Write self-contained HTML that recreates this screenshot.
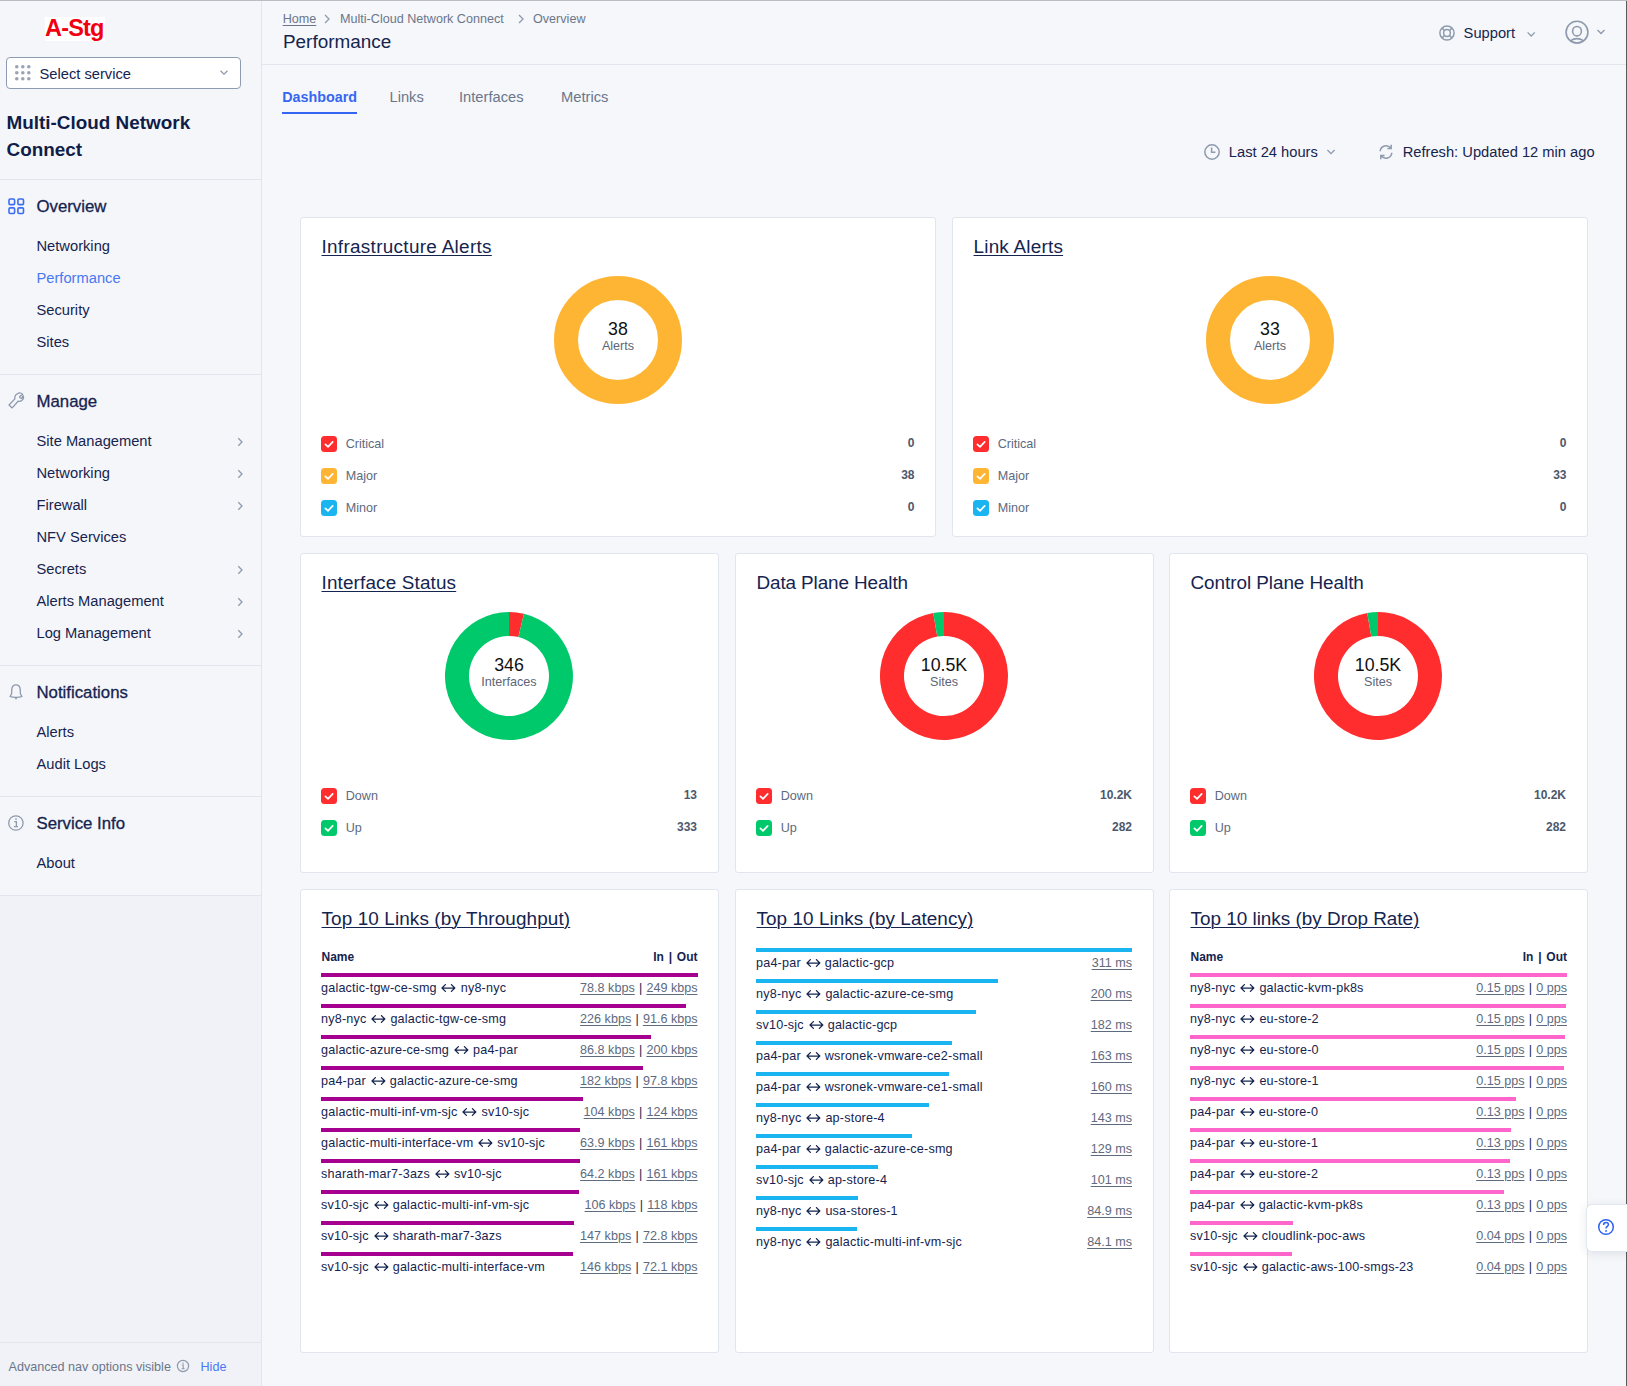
<!DOCTYPE html>
<html><head><meta charset="utf-8"><title>Performance</title>
<style>
html,body{margin:0;padding:0;width:1627px;height:1386px;overflow:hidden;background:#f4f6f9;}
body{position:relative;font-family:"Liberation Sans",sans-serif;}
.a{position:absolute;}
.t{position:absolute;white-space:nowrap;}
.card{background:#fff;border:1px solid #e0e5ee;border-radius:3px;}
.arr{display:inline-block;vertical-align:baseline;}
.sep{color:#15244f;padding:0 0.7px;}
.ul{text-decoration:underline;text-underline-offset:2px;text-decoration-thickness:1px;}
</style></head><body>
<div class="a" style="left:0px;top:0px;width:261px;height:896px;background:#f5f6f9;"></div>
<div class="a" style="left:0px;top:896px;width:261px;height:490px;background:#f0f2f7;"></div>
<div class="a" style="left:261px;top:0px;width:1px;height:1386px;background:#e0e5ee;"></div>
<div class="a" style="left:45px;top:17px;width:60px;height:24px;background:#ffffff;"></div>
<div class="t" style="top:17.00px;font-size:23.50px;line-height:23.50px;color:#f2000f;font-weight:700;left:45px;letter-spacing:-0.8px;">A-Stg</div>
<div class="a" style="left:6px;top:57px;width:233px;height:30px;border:1px solid #8f9bb0;border-radius:4px;background:#fff"></div>
<svg class="a" style="left:0;top:0" width="261" height="100"><circle cx="16.8" cy="66.8" r="1.8" fill="#9aa4b5"/><circle cx="16.8" cy="72.8" r="1.8" fill="#9aa4b5"/><circle cx="16.8" cy="78.8" r="1.8" fill="#9aa4b5"/><circle cx="22.8" cy="66.8" r="1.8" fill="#9aa4b5"/><circle cx="22.8" cy="72.8" r="1.8" fill="#9aa4b5"/><circle cx="22.8" cy="78.8" r="1.8" fill="#9aa4b5"/><circle cx="28.8" cy="66.8" r="1.8" fill="#9aa4b5"/><circle cx="28.8" cy="72.8" r="1.8" fill="#9aa4b5"/><circle cx="28.8" cy="78.8" r="1.8" fill="#9aa4b5"/><path d="M220.5 70.8 L224 74.2 L227.5 70.8" stroke="#8e9aad" stroke-width="1.3" fill="none"/></svg>
<div class="t" style="top:67.00px;font-size:14.70px;line-height:14.70px;color:#15244f;left:39.5px;">Select service</div>
<div class="t" style="top:114.00px;font-size:18.90px;line-height:18.90px;color:#0f1d48;font-weight:700;left:6.5px;">Multi-Cloud Network</div>
<div class="t" style="top:141.00px;font-size:18.90px;line-height:18.90px;color:#0f1d48;font-weight:700;left:6.5px;">Connect</div>
<div class="a" style="left:0px;top:179px;width:261px;height:1px;background:#e0e5ee;"></div>
<svg class="a" style="left:8px;top:198px" width="17" height="17" viewBox="0 0 17 17"><g fill="none" stroke="#3b6cf4" stroke-width="1.6"><rect x="1" y="1" width="5.6" height="5.6" rx="1.2"/><rect x="9.9" y="1" width="5.6" height="5.6" rx="1.2"/><rect x="1" y="9.9" width="5.6" height="5.6" rx="1.2"/><rect x="9.9" y="9.9" width="5.6" height="5.6" rx="1.2"/></g></svg>
<div class="t" style="top:199.00px;font-size:16.80px;line-height:16.80px;color:#15244f;left:36.5px;-webkit-text-stroke:0.3px #15244f;">Overview</div>
<div class="t" style="top:239.00px;font-size:14.70px;line-height:14.70px;color:#15244f;left:36.5px;">Networking</div>
<div class="t" style="top:271.00px;font-size:14.70px;line-height:14.70px;color:#4a78f2;left:36.5px;">Performance</div>
<div class="t" style="top:303.00px;font-size:14.70px;line-height:14.70px;color:#15244f;left:36.5px;">Security</div>
<div class="t" style="top:335.00px;font-size:14.70px;line-height:14.70px;color:#15244f;left:36.5px;">Sites</div>
<div class="a" style="left:0px;top:374px;width:261px;height:1px;background:#e0e5ee;"></div>
<svg class="a" style="left:7px;top:391px" width="18" height="18" viewBox="0 0 18 18"><path d="M10.6 2.6 C12.2 1.6 14.6 1.9 15.6 3.4 L12.6 5.6 L13.2 7 L14.5 7.4 L16.2 4.8 C17.2 7 15.6 10.3 12.3 10.3 L11.1 10.2 L5.2 16.9 L2 14 L7.9 7.9 L7.8 6.2 C7.9 4.7 9.2 3.2 10.6 2.6 Z" fill="none" stroke="#8e9aad" stroke-width="1.3" stroke-linejoin="round"/></svg>
<div class="t" style="top:394.00px;font-size:16.80px;line-height:16.80px;color:#15244f;left:36.5px;-webkit-text-stroke:0.3px #15244f;">Manage</div>
<div class="t" style="top:434.00px;font-size:14.70px;line-height:14.70px;color:#15244f;left:36.5px;">Site Management</div>
<svg class="a" style="left:234px;top:435.5px" width="12" height="12"><path d="M4.3 2.2 L8 6 L4.3 9.8" stroke="#8e9aad" stroke-width="1.3" fill="none"/></svg>
<div class="t" style="top:466.00px;font-size:14.70px;line-height:14.70px;color:#15244f;left:36.5px;">Networking</div>
<svg class="a" style="left:234px;top:467.5px" width="12" height="12"><path d="M4.3 2.2 L8 6 L4.3 9.8" stroke="#8e9aad" stroke-width="1.3" fill="none"/></svg>
<div class="t" style="top:498.00px;font-size:14.70px;line-height:14.70px;color:#15244f;left:36.5px;">Firewall</div>
<svg class="a" style="left:234px;top:499.5px" width="12" height="12"><path d="M4.3 2.2 L8 6 L4.3 9.8" stroke="#8e9aad" stroke-width="1.3" fill="none"/></svg>
<div class="t" style="top:530.00px;font-size:14.70px;line-height:14.70px;color:#15244f;left:36.5px;">NFV Services</div>
<div class="t" style="top:562.00px;font-size:14.70px;line-height:14.70px;color:#15244f;left:36.5px;">Secrets</div>
<svg class="a" style="left:234px;top:563.5px" width="12" height="12"><path d="M4.3 2.2 L8 6 L4.3 9.8" stroke="#8e9aad" stroke-width="1.3" fill="none"/></svg>
<div class="t" style="top:594.00px;font-size:14.70px;line-height:14.70px;color:#15244f;left:36.5px;">Alerts Management</div>
<svg class="a" style="left:234px;top:595.5px" width="12" height="12"><path d="M4.3 2.2 L8 6 L4.3 9.8" stroke="#8e9aad" stroke-width="1.3" fill="none"/></svg>
<div class="t" style="top:626.00px;font-size:14.70px;line-height:14.70px;color:#15244f;left:36.5px;">Log Management</div>
<svg class="a" style="left:234px;top:627.5px" width="12" height="12"><path d="M4.3 2.2 L8 6 L4.3 9.8" stroke="#8e9aad" stroke-width="1.3" fill="none"/></svg>
<div class="a" style="left:0px;top:665px;width:261px;height:1px;background:#e0e5ee;"></div>
<svg class="a" style="left:7px;top:683px" width="18" height="18" viewBox="0 0 18 18"><path d="M3 13.5 L4.6 10.8 L4.8 6.2 C5 3.6 6.8 1.8 9 1.8 C11.2 1.8 13 3.6 13.2 6.2 L13.4 10.8 L15 13.5 C12 14.6 6 14.6 3 13.5 Z" fill="none" stroke="#8e9aad" stroke-width="1.3" stroke-linejoin="round"/><path d="M7.3 14.6 L9 16.8 L10.7 14.6 Z" fill="#8e9aad"/></svg>
<div class="t" style="top:685.00px;font-size:16.80px;line-height:16.80px;color:#15244f;left:36.5px;-webkit-text-stroke:0.3px #15244f;">Notifications</div>
<div class="t" style="top:725.00px;font-size:14.70px;line-height:14.70px;color:#15244f;left:36.5px;">Alerts</div>
<div class="t" style="top:757.00px;font-size:14.70px;line-height:14.70px;color:#15244f;left:36.5px;">Audit Logs</div>
<div class="a" style="left:0px;top:796px;width:261px;height:1px;background:#e0e5ee;"></div>
<svg class="a" style="left:7px;top:814px" width="18" height="18" viewBox="0 0 18 18"><circle cx="8.9" cy="9" r="7.2" fill="none" stroke="#8e9aad" stroke-width="1.3"/><rect x="8.3" y="4.3" width="1.5" height="1.6" fill="#8e9aad"/><path d="M7.2 7.6 H9.4 V12.6 M6.9 12.6 H11" fill="none" stroke="#8e9aad" stroke-width="1.3"/></svg>
<div class="t" style="top:816.00px;font-size:16.80px;line-height:16.80px;color:#15244f;left:36.5px;-webkit-text-stroke:0.3px #15244f;">Service Info</div>
<div class="t" style="top:856.00px;font-size:14.70px;line-height:14.70px;color:#15244f;left:36.5px;">About</div>
<div class="a" style="left:0px;top:895px;width:261px;height:1px;background:#e0e5ee;"></div>
<div class="a" style="left:0px;top:1342px;width:261px;height:1px;background:#e0e5ee;"></div>
<div class="t" style="top:1361.00px;font-size:12.60px;line-height:12.60px;color:#6b768a;left:8.5px;">Advanced nav options visible</div>
<svg class="a" style="left:176px;top:1359px" width="14" height="14" viewBox="0 0 14 14"><circle cx="7" cy="7" r="5.6" fill="none" stroke="#8e9aad" stroke-width="1.2"/><rect x="6.5" y="3.6" width="1.2" height="1.2" fill="#8e9aad"/><path d="M5.8 6 H7.2 V9.8 M5.6 9.8 H8.6" fill="none" stroke="#8e9aad" stroke-width="1.1"/></svg>
<div class="t" style="top:1361.00px;font-size:12.60px;line-height:12.60px;color:#4a78f2;left:200.5px;">Hide</div>
<div class="a" style="left:262px;top:0px;width:1365px;height:1386px;background:#f5f7fa;"></div>
<div class="a" style="left:262px;top:64px;width:1365px;height:1px;background:#e0e5ee;"></div>
<div class="t" style="top:13.00px;font-size:12.60px;line-height:12.60px;color:#6b768a;left:282.7px;"><span style="text-decoration:underline;text-underline-offset:2px">Home</span></div>
<svg class="a" style="left:320px;top:12px" width="14" height="14"><path d="M5 3 L9 7 L5 11" stroke="#8e9aad" stroke-width="1.3" fill="none"/></svg>
<div class="t" style="top:13.00px;font-size:12.60px;line-height:12.60px;color:#6b768a;left:340px;">Multi-Cloud Network Connect</div>
<svg class="a" style="left:514px;top:12px" width="14" height="14"><path d="M5 3 L9 7 L5 11" stroke="#8e9aad" stroke-width="1.3" fill="none"/></svg>
<div class="t" style="top:13.00px;font-size:12.60px;line-height:12.60px;color:#6b768a;left:533px;">Overview</div>
<div class="t" style="top:33.00px;font-size:18.90px;line-height:18.90px;color:#15244f;left:283px;">Performance</div>
<svg class="a" style="left:1438px;top:24px" width="18" height="18" viewBox="0 0 18 18"><g fill="none" stroke="#8e9aad" stroke-width="1.5"><circle cx="9" cy="9" r="7.1"/><circle cx="9" cy="9" r="3.4"/><path d="M3.9 3.9 L6.7 6.7 M14.1 3.9 L11.3 6.7 M3.9 14.1 L6.7 11.3 M14.1 14.1 L11.3 11.3"/></g></svg>
<div class="t" style="top:26.00px;font-size:14.70px;line-height:14.70px;color:#15244f;left:1463.6px;">Support</div>
<svg class="a" style="left:1524px;top:27px" width="14" height="14"><path d="M3.6 5.4 L7.2 9 L10.8 5.4" stroke="#8e9aad" stroke-width="1.3" fill="none"/></svg>
<svg class="a" style="left:1564px;top:20px" width="26" height="26" viewBox="0 0 26 26"><g fill="none" stroke="#8e9aad" stroke-width="1.6"><circle cx="13" cy="12.2" r="10.9"/><ellipse cx="13" cy="11.2" rx="4.4" ry="4.7"/><path d="M6.4 20.9 Q13 16.4 19.6 20.9"/></g></svg>
<svg class="a" style="left:1594px;top:25px" width="14" height="14"><path d="M3.5 5 L7 8.5 L10.5 5" stroke="#8e9aad" stroke-width="1.3" fill="none"/></svg>
<div class="a" style="left:1626px;top:0px;width:1px;height:1386px;background:#5a5a5a;"></div>
<div class="t" style="top:90.00px;font-size:14.30px;line-height:14.30px;color:#3566f2;font-weight:700;left:282.3px;">Dashboard</div>
<div class="a" style="left:282px;top:112px;width:75px;height:2px;background:#3566f2;"></div>
<div class="t" style="top:90.00px;font-size:14.70px;line-height:14.70px;color:#6b768a;left:389.5px;">Links</div>
<div class="t" style="top:90.00px;font-size:14.70px;line-height:14.70px;color:#6b768a;left:459px;">Interfaces</div>
<div class="t" style="top:90.00px;font-size:14.70px;line-height:14.70px;color:#6b768a;left:561px;">Metrics</div>
<svg class="a" style="left:1203px;top:143px" width="18" height="18" viewBox="0 0 18 18"><g fill="none" stroke="#8e9aad" stroke-width="1.5"><circle cx="9" cy="9" r="7.2"/><path d="M8.6 4.6 V9.3 H12.4"/></g></svg>
<div class="t" style="top:145.00px;font-size:14.70px;line-height:14.70px;color:#15244f;left:1228.8px;">Last 24 hours</div>
<svg class="a" style="left:1324px;top:145px" width="14" height="14"><path d="M3.4 5 L7 8.6 L10.6 5" stroke="#8e9aad" stroke-width="1.3" fill="none"/></svg>
<svg class="a" style="left:1377px;top:143px" width="18" height="18" viewBox="0 0 18 18"><g fill="none" stroke="#8e9aad" stroke-width="1.5"><path d="M3.2 8.3 A5.9 5.9 0 0 1 13.8 5.2"/><path d="M14.2 1.8 V5.6 H10.4"/><path d="M14.8 9.7 A5.9 5.9 0 0 1 4.2 12.8"/><path d="M3.8 16.2 V12.4 H7.6"/></g></svg>
<div class="t" style="top:145.00px;font-size:14.70px;line-height:14.70px;color:#15244f;left:1402.7px;">Refresh: Updated 12 min ago</div>
<div class="a card" style="left:300px;top:217px;width:634px;height:318px"></div>
<div class="t" style="top:238.00px;font-size:18.90px;line-height:18.90px;color:#15244f;left:321.5px;letter-spacing:0.31px;"><span class="ul">Infrastructure Alerts</span></div>
<svg class="a" style="left:0;top:0;overflow:visible" width="1" height="1"><circle cx="618" cy="340" r="52" fill="none" stroke="#ffb534" stroke-width="24"/></svg>
<div class="t" style="top:321.00px;font-size:17.80px;line-height:17.80px;color:#111111;left:518.0px;width:200px;text-align:center;">38</div>
<div class="t" style="top:340.00px;font-size:12.60px;line-height:12.60px;color:#5c6577;left:518.0px;width:200px;text-align:center;">Alerts</div>
<svg class="a" style="left:321px;top:436px" width="16" height="16"><rect width="16" height="16" rx="3.5" fill="#ff2d2d"/><path d="M4.4 8.3 L7 10.8 L11.7 5.8" stroke="#fff" stroke-width="1.7" fill="none" stroke-linecap="round" stroke-linejoin="round"/></svg>
<div class="t" style="top:438.00px;font-size:12.60px;line-height:12.60px;color:#5d6a80;left:345.7px;">Critical</div>
<div class="t" style="top:437.00px;font-size:12.00px;line-height:12.00px;color:#4c586c;font-weight:700;right:712.5px;text-align:right;">0</div>
<svg class="a" style="left:321px;top:468px" width="16" height="16"><rect width="16" height="16" rx="3.5" fill="#ffb534"/><path d="M4.4 8.3 L7 10.8 L11.7 5.8" stroke="#fff" stroke-width="1.7" fill="none" stroke-linecap="round" stroke-linejoin="round"/></svg>
<div class="t" style="top:470.00px;font-size:12.60px;line-height:12.60px;color:#5d6a80;left:345.7px;">Major</div>
<div class="t" style="top:469.00px;font-size:12.00px;line-height:12.00px;color:#4c586c;font-weight:700;right:712.5px;text-align:right;">38</div>
<svg class="a" style="left:321px;top:500px" width="16" height="16"><rect width="16" height="16" rx="3.5" fill="#1ab4f0"/><path d="M4.4 8.3 L7 10.8 L11.7 5.8" stroke="#fff" stroke-width="1.7" fill="none" stroke-linecap="round" stroke-linejoin="round"/></svg>
<div class="t" style="top:502.00px;font-size:12.60px;line-height:12.60px;color:#5d6a80;left:345.7px;">Minor</div>
<div class="t" style="top:501.00px;font-size:12.00px;line-height:12.00px;color:#4c586c;font-weight:700;right:712.5px;text-align:right;">0</div>
<div class="a card" style="left:952px;top:217px;width:634px;height:318px"></div>
<div class="t" style="top:238.00px;font-size:18.90px;line-height:18.90px;color:#15244f;left:973.5px;letter-spacing:0.22px;"><span class="ul">Link Alerts</span></div>
<svg class="a" style="left:0;top:0;overflow:visible" width="1" height="1"><circle cx="1270" cy="340" r="52" fill="none" stroke="#ffb534" stroke-width="24"/></svg>
<div class="t" style="top:321.00px;font-size:17.80px;line-height:17.80px;color:#111111;left:1170.0px;width:200px;text-align:center;">33</div>
<div class="t" style="top:340.00px;font-size:12.60px;line-height:12.60px;color:#5c6577;left:1170.0px;width:200px;text-align:center;">Alerts</div>
<svg class="a" style="left:973px;top:436px" width="16" height="16"><rect width="16" height="16" rx="3.5" fill="#ff2d2d"/><path d="M4.4 8.3 L7 10.8 L11.7 5.8" stroke="#fff" stroke-width="1.7" fill="none" stroke-linecap="round" stroke-linejoin="round"/></svg>
<div class="t" style="top:438.00px;font-size:12.60px;line-height:12.60px;color:#5d6a80;left:997.7px;">Critical</div>
<div class="t" style="top:437.00px;font-size:12.00px;line-height:12.00px;color:#4c586c;font-weight:700;right:60.5px;text-align:right;">0</div>
<svg class="a" style="left:973px;top:468px" width="16" height="16"><rect width="16" height="16" rx="3.5" fill="#ffb534"/><path d="M4.4 8.3 L7 10.8 L11.7 5.8" stroke="#fff" stroke-width="1.7" fill="none" stroke-linecap="round" stroke-linejoin="round"/></svg>
<div class="t" style="top:470.00px;font-size:12.60px;line-height:12.60px;color:#5d6a80;left:997.7px;">Major</div>
<div class="t" style="top:469.00px;font-size:12.00px;line-height:12.00px;color:#4c586c;font-weight:700;right:60.5px;text-align:right;">33</div>
<svg class="a" style="left:973px;top:500px" width="16" height="16"><rect width="16" height="16" rx="3.5" fill="#1ab4f0"/><path d="M4.4 8.3 L7 10.8 L11.7 5.8" stroke="#fff" stroke-width="1.7" fill="none" stroke-linecap="round" stroke-linejoin="round"/></svg>
<div class="t" style="top:502.00px;font-size:12.60px;line-height:12.60px;color:#5d6a80;left:997.7px;">Minor</div>
<div class="t" style="top:501.00px;font-size:12.00px;line-height:12.00px;color:#4c586c;font-weight:700;right:60.5px;text-align:right;">0</div>
<div class="a card" style="left:300px;top:553px;width:417px;height:318px"></div>
<div class="t" style="top:574.00px;font-size:18.90px;line-height:18.90px;color:#15244f;left:321.5px;letter-spacing:0.15px;"><span class="ul">Interface Status</span></div>
<svg class="a" style="left:0;top:0;overflow:visible" width="1" height="1"><path d="M509.00 612.00 A64 64 0 0 1 523.97 613.78 L518.36 637.11 A40 40 0 0 0 509.00 636.00 Z" fill="#ff2d2d"/><path d="M523.97 613.78 A64 64 0 1 1 509.00 612.00 L509.00 636.00 A40 40 0 1 0 518.36 637.11 Z" fill="#00c96b"/></svg>
<div class="t" style="top:657.00px;font-size:17.80px;line-height:17.80px;color:#111111;left:409.0px;width:200px;text-align:center;">346</div>
<div class="t" style="top:676.00px;font-size:12.60px;line-height:12.60px;color:#5c6577;left:409.0px;width:200px;text-align:center;">Interfaces</div>
<svg class="a" style="left:321px;top:788px" width="16" height="16"><rect width="16" height="16" rx="3.5" fill="#ff2d2d"/><path d="M4.4 8.3 L7 10.8 L11.7 5.8" stroke="#fff" stroke-width="1.7" fill="none" stroke-linecap="round" stroke-linejoin="round"/></svg>
<div class="t" style="top:790.00px;font-size:12.60px;line-height:12.60px;color:#5d6a80;left:345.7px;">Down</div>
<div class="t" style="top:789.00px;font-size:12.00px;line-height:12.00px;color:#4c586c;font-weight:700;right:930px;text-align:right;">13</div>
<svg class="a" style="left:321px;top:820px" width="16" height="16"><rect width="16" height="16" rx="3.5" fill="#00c96b"/><path d="M4.4 8.3 L7 10.8 L11.7 5.8" stroke="#fff" stroke-width="1.7" fill="none" stroke-linecap="round" stroke-linejoin="round"/></svg>
<div class="t" style="top:822.00px;font-size:12.60px;line-height:12.60px;color:#5d6a80;left:345.7px;">Up</div>
<div class="t" style="top:821.00px;font-size:12.00px;line-height:12.00px;color:#4c586c;font-weight:700;right:930px;text-align:right;">333</div>
<div class="a card" style="left:735px;top:553px;width:417px;height:318px"></div>
<div class="t" style="top:574.00px;font-size:18.90px;line-height:18.90px;color:#15244f;left:756.5px;letter-spacing:-0.11px;">Data Plane Health</div>
<svg class="a" style="left:0;top:0;overflow:visible" width="1" height="1"><path d="M944.00 612.00 A64 64 0 1 1 933.23 612.91 L937.27 636.57 A40 40 0 1 0 944.00 636.00 Z" fill="#ff2d2d"/><path d="M933.23 612.91 A64 64 0 0 1 944.00 612.00 L944.00 636.00 A40 40 0 0 0 937.27 636.57 Z" fill="#00c96b"/></svg>
<div class="t" style="top:657.00px;font-size:17.80px;line-height:17.80px;color:#111111;left:844.0px;width:200px;text-align:center;">10.5K</div>
<div class="t" style="top:676.00px;font-size:12.60px;line-height:12.60px;color:#5c6577;left:844.0px;width:200px;text-align:center;">Sites</div>
<svg class="a" style="left:756px;top:788px" width="16" height="16"><rect width="16" height="16" rx="3.5" fill="#ff2d2d"/><path d="M4.4 8.3 L7 10.8 L11.7 5.8" stroke="#fff" stroke-width="1.7" fill="none" stroke-linecap="round" stroke-linejoin="round"/></svg>
<div class="t" style="top:790.00px;font-size:12.60px;line-height:12.60px;color:#5d6a80;left:780.7px;">Down</div>
<div class="t" style="top:789.00px;font-size:12.00px;line-height:12.00px;color:#4c586c;font-weight:700;right:495px;text-align:right;">10.2K</div>
<svg class="a" style="left:756px;top:820px" width="16" height="16"><rect width="16" height="16" rx="3.5" fill="#00c96b"/><path d="M4.4 8.3 L7 10.8 L11.7 5.8" stroke="#fff" stroke-width="1.7" fill="none" stroke-linecap="round" stroke-linejoin="round"/></svg>
<div class="t" style="top:822.00px;font-size:12.60px;line-height:12.60px;color:#5d6a80;left:780.7px;">Up</div>
<div class="t" style="top:821.00px;font-size:12.00px;line-height:12.00px;color:#4c586c;font-weight:700;right:495px;text-align:right;">282</div>
<div class="a card" style="left:1169px;top:553px;width:417px;height:318px"></div>
<div class="t" style="top:574.00px;font-size:18.90px;line-height:18.90px;color:#15244f;left:1190.5px;letter-spacing:-0.05px;">Control Plane Health</div>
<svg class="a" style="left:0;top:0;overflow:visible" width="1" height="1"><path d="M1378.00 612.00 A64 64 0 1 1 1367.23 612.91 L1371.27 636.57 A40 40 0 1 0 1378.00 636.00 Z" fill="#ff2d2d"/><path d="M1367.23 612.91 A64 64 0 0 1 1378.00 612.00 L1378.00 636.00 A40 40 0 0 0 1371.27 636.57 Z" fill="#00c96b"/></svg>
<div class="t" style="top:657.00px;font-size:17.80px;line-height:17.80px;color:#111111;left:1278.0px;width:200px;text-align:center;">10.5K</div>
<div class="t" style="top:676.00px;font-size:12.60px;line-height:12.60px;color:#5c6577;left:1278.0px;width:200px;text-align:center;">Sites</div>
<svg class="a" style="left:1190px;top:788px" width="16" height="16"><rect width="16" height="16" rx="3.5" fill="#ff2d2d"/><path d="M4.4 8.3 L7 10.8 L11.7 5.8" stroke="#fff" stroke-width="1.7" fill="none" stroke-linecap="round" stroke-linejoin="round"/></svg>
<div class="t" style="top:790.00px;font-size:12.60px;line-height:12.60px;color:#5d6a80;left:1214.7px;">Down</div>
<div class="t" style="top:789.00px;font-size:12.00px;line-height:12.00px;color:#4c586c;font-weight:700;right:61px;text-align:right;">10.2K</div>
<svg class="a" style="left:1190px;top:820px" width="16" height="16"><rect width="16" height="16" rx="3.5" fill="#00c96b"/><path d="M4.4 8.3 L7 10.8 L11.7 5.8" stroke="#fff" stroke-width="1.7" fill="none" stroke-linecap="round" stroke-linejoin="round"/></svg>
<div class="t" style="top:822.00px;font-size:12.60px;line-height:12.60px;color:#5d6a80;left:1214.7px;">Up</div>
<div class="t" style="top:821.00px;font-size:12.00px;line-height:12.00px;color:#4c586c;font-weight:700;right:61px;text-align:right;">282</div>
<div class="a card" style="left:300px;top:889px;width:417px;height:462px"></div>
<div class="t" style="top:910.00px;font-size:18.90px;line-height:18.90px;color:#15244f;left:321.5px;letter-spacing:0.12px;"><span class="ul">Top 10 Links (by Throughput)</span></div>
<div class="t" style="top:951.00px;font-size:12.00px;line-height:12.00px;color:#15244f;font-weight:700;left:321.5px;">Name</div>
<div class="t" style="top:951.00px;font-size:12.00px;line-height:12.00px;color:#15244f;font-weight:700;right:929.5px;text-align:right;">In<span style='padding:0 1.5px'> | </span>Out</div>
<div class="a" style="left:321px;top:973px;width:377px;height:4px;background:#a5008f;"></div>
<div class="t" style="top:982.00px;font-size:12.60px;line-height:12.60px;color:#15244f;left:321px;letter-spacing:0.2px;">galactic-tgw-ce-smg <svg class="arr" width="16.5" height="8" viewBox="0 0 16.5 8"><path d="M2 4 H14.8 M5.4 0.6 L2 4 L5.4 7.4 M11.4 0.6 L14.8 4 L11.4 7.4" fill="none" stroke="#15244f" stroke-width="1.25" stroke-linecap="round" stroke-linejoin="round"/></svg> ny8-nyc</div>
<div class="t" style="top:982.00px;font-size:12.60px;line-height:12.60px;color:#5e6a7e;right:929.5px;text-align:right;"><span class="ul">78.8 kbps</span><span class="sep"> | </span><span class="ul">249 kbps</span></div>
<div class="a" style="left:321px;top:1004px;width:365px;height:4px;background:#a5008f;"></div>
<div class="t" style="top:1013.00px;font-size:12.60px;line-height:12.60px;color:#15244f;left:321px;letter-spacing:0.2px;">ny8-nyc <svg class="arr" width="16.5" height="8" viewBox="0 0 16.5 8"><path d="M2 4 H14.8 M5.4 0.6 L2 4 L5.4 7.4 M11.4 0.6 L14.8 4 L11.4 7.4" fill="none" stroke="#15244f" stroke-width="1.25" stroke-linecap="round" stroke-linejoin="round"/></svg> galactic-tgw-ce-smg</div>
<div class="t" style="top:1013.00px;font-size:12.60px;line-height:12.60px;color:#5e6a7e;right:929.5px;text-align:right;"><span class="ul">226 kbps</span><span class="sep"> | </span><span class="ul">91.6 kbps</span></div>
<div class="a" style="left:321px;top:1035px;width:329.5px;height:4px;background:#a5008f;"></div>
<div class="t" style="top:1044.00px;font-size:12.60px;line-height:12.60px;color:#15244f;left:321px;letter-spacing:0.2px;">galactic-azure-ce-smg <svg class="arr" width="16.5" height="8" viewBox="0 0 16.5 8"><path d="M2 4 H14.8 M5.4 0.6 L2 4 L5.4 7.4 M11.4 0.6 L14.8 4 L11.4 7.4" fill="none" stroke="#15244f" stroke-width="1.25" stroke-linecap="round" stroke-linejoin="round"/></svg> pa4-par</div>
<div class="t" style="top:1044.00px;font-size:12.60px;line-height:12.60px;color:#5e6a7e;right:929.5px;text-align:right;"><span class="ul">86.8 kbps</span><span class="sep"> | </span><span class="ul">200 kbps</span></div>
<div class="a" style="left:321px;top:1066px;width:322px;height:4px;background:#a5008f;"></div>
<div class="t" style="top:1075.00px;font-size:12.60px;line-height:12.60px;color:#15244f;left:321px;letter-spacing:0.2px;">pa4-par <svg class="arr" width="16.5" height="8" viewBox="0 0 16.5 8"><path d="M2 4 H14.8 M5.4 0.6 L2 4 L5.4 7.4 M11.4 0.6 L14.8 4 L11.4 7.4" fill="none" stroke="#15244f" stroke-width="1.25" stroke-linecap="round" stroke-linejoin="round"/></svg> galactic-azure-ce-smg</div>
<div class="t" style="top:1075.00px;font-size:12.60px;line-height:12.60px;color:#5e6a7e;right:929.5px;text-align:right;"><span class="ul">182 kbps</span><span class="sep"> | </span><span class="ul">97.8 kbps</span></div>
<div class="a" style="left:321px;top:1097px;width:262px;height:4px;background:#a5008f;"></div>
<div class="t" style="top:1106.00px;font-size:12.60px;line-height:12.60px;color:#15244f;left:321px;letter-spacing:0.2px;">galactic-multi-inf-vm-sjc <svg class="arr" width="16.5" height="8" viewBox="0 0 16.5 8"><path d="M2 4 H14.8 M5.4 0.6 L2 4 L5.4 7.4 M11.4 0.6 L14.8 4 L11.4 7.4" fill="none" stroke="#15244f" stroke-width="1.25" stroke-linecap="round" stroke-linejoin="round"/></svg> sv10-sjc</div>
<div class="t" style="top:1106.00px;font-size:12.60px;line-height:12.60px;color:#5e6a7e;right:929.5px;text-align:right;"><span class="ul">104 kbps</span><span class="sep"> | </span><span class="ul">124 kbps</span></div>
<div class="a" style="left:321px;top:1128px;width:259px;height:4px;background:#a5008f;"></div>
<div class="t" style="top:1137.00px;font-size:12.60px;line-height:12.60px;color:#15244f;left:321px;letter-spacing:0.2px;">galactic-multi-interface-vm <svg class="arr" width="16.5" height="8" viewBox="0 0 16.5 8"><path d="M2 4 H14.8 M5.4 0.6 L2 4 L5.4 7.4 M11.4 0.6 L14.8 4 L11.4 7.4" fill="none" stroke="#15244f" stroke-width="1.25" stroke-linecap="round" stroke-linejoin="round"/></svg> sv10-sjc</div>
<div class="t" style="top:1137.00px;font-size:12.60px;line-height:12.60px;color:#5e6a7e;right:929.5px;text-align:right;"><span class="ul">63.9 kbps</span><span class="sep"> | </span><span class="ul">161 kbps</span></div>
<div class="a" style="left:321px;top:1159px;width:259px;height:4px;background:#a5008f;"></div>
<div class="t" style="top:1168.00px;font-size:12.60px;line-height:12.60px;color:#15244f;left:321px;letter-spacing:0.2px;">sharath-mar7-3azs <svg class="arr" width="16.5" height="8" viewBox="0 0 16.5 8"><path d="M2 4 H14.8 M5.4 0.6 L2 4 L5.4 7.4 M11.4 0.6 L14.8 4 L11.4 7.4" fill="none" stroke="#15244f" stroke-width="1.25" stroke-linecap="round" stroke-linejoin="round"/></svg> sv10-sjc</div>
<div class="t" style="top:1168.00px;font-size:12.60px;line-height:12.60px;color:#5e6a7e;right:929.5px;text-align:right;"><span class="ul">64.2 kbps</span><span class="sep"> | </span><span class="ul">161 kbps</span></div>
<div class="a" style="left:321px;top:1190px;width:258px;height:4px;background:#a5008f;"></div>
<div class="t" style="top:1199.00px;font-size:12.60px;line-height:12.60px;color:#15244f;left:321px;letter-spacing:0.2px;">sv10-sjc <svg class="arr" width="16.5" height="8" viewBox="0 0 16.5 8"><path d="M2 4 H14.8 M5.4 0.6 L2 4 L5.4 7.4 M11.4 0.6 L14.8 4 L11.4 7.4" fill="none" stroke="#15244f" stroke-width="1.25" stroke-linecap="round" stroke-linejoin="round"/></svg> galactic-multi-inf-vm-sjc</div>
<div class="t" style="top:1199.00px;font-size:12.60px;line-height:12.60px;color:#5e6a7e;right:929.5px;text-align:right;"><span class="ul">106 kbps</span><span class="sep"> | </span><span class="ul">118 kbps</span></div>
<div class="a" style="left:321px;top:1221px;width:253px;height:4px;background:#a5008f;"></div>
<div class="t" style="top:1230.00px;font-size:12.60px;line-height:12.60px;color:#15244f;left:321px;letter-spacing:0.2px;">sv10-sjc <svg class="arr" width="16.5" height="8" viewBox="0 0 16.5 8"><path d="M2 4 H14.8 M5.4 0.6 L2 4 L5.4 7.4 M11.4 0.6 L14.8 4 L11.4 7.4" fill="none" stroke="#15244f" stroke-width="1.25" stroke-linecap="round" stroke-linejoin="round"/></svg> sharath-mar7-3azs</div>
<div class="t" style="top:1230.00px;font-size:12.60px;line-height:12.60px;color:#5e6a7e;right:929.5px;text-align:right;"><span class="ul">147 kbps</span><span class="sep"> | </span><span class="ul">72.8 kbps</span></div>
<div class="a" style="left:321px;top:1252px;width:252px;height:4px;background:#a5008f;"></div>
<div class="t" style="top:1261.00px;font-size:12.60px;line-height:12.60px;color:#15244f;left:321px;letter-spacing:0.2px;">sv10-sjc <svg class="arr" width="16.5" height="8" viewBox="0 0 16.5 8"><path d="M2 4 H14.8 M5.4 0.6 L2 4 L5.4 7.4 M11.4 0.6 L14.8 4 L11.4 7.4" fill="none" stroke="#15244f" stroke-width="1.25" stroke-linecap="round" stroke-linejoin="round"/></svg> galactic-multi-interface-vm</div>
<div class="t" style="top:1261.00px;font-size:12.60px;line-height:12.60px;color:#5e6a7e;right:929.5px;text-align:right;"><span class="ul">146 kbps</span><span class="sep"> | </span><span class="ul">72.1 kbps</span></div>
<div class="a card" style="left:735px;top:889px;width:417px;height:462px"></div>
<div class="t" style="top:910.00px;font-size:18.90px;line-height:18.90px;color:#15244f;left:756.5px;letter-spacing:0.06px;"><span class="ul">Top 10 Links (by Latency)</span></div>
<div class="a" style="left:756px;top:948px;width:376px;height:4px;background:#1ab4f0;"></div>
<div class="t" style="top:957.00px;font-size:12.60px;line-height:12.60px;color:#15244f;left:756px;letter-spacing:0.2px;">pa4-par <svg class="arr" width="16.5" height="8" viewBox="0 0 16.5 8"><path d="M2 4 H14.8 M5.4 0.6 L2 4 L5.4 7.4 M11.4 0.6 L14.8 4 L11.4 7.4" fill="none" stroke="#15244f" stroke-width="1.25" stroke-linecap="round" stroke-linejoin="round"/></svg> galactic-gcp</div>
<div class="t" style="top:957.00px;font-size:12.60px;line-height:12.60px;color:#5e6a7e;right:495px;text-align:right;"><span class="ul">311 ms</span></div>
<div class="a" style="left:756px;top:979px;width:242px;height:4px;background:#1ab4f0;"></div>
<div class="t" style="top:988.00px;font-size:12.60px;line-height:12.60px;color:#15244f;left:756px;letter-spacing:0.2px;">ny8-nyc <svg class="arr" width="16.5" height="8" viewBox="0 0 16.5 8"><path d="M2 4 H14.8 M5.4 0.6 L2 4 L5.4 7.4 M11.4 0.6 L14.8 4 L11.4 7.4" fill="none" stroke="#15244f" stroke-width="1.25" stroke-linecap="round" stroke-linejoin="round"/></svg> galactic-azure-ce-smg</div>
<div class="t" style="top:988.00px;font-size:12.60px;line-height:12.60px;color:#5e6a7e;right:495px;text-align:right;"><span class="ul">200 ms</span></div>
<div class="a" style="left:756px;top:1010px;width:220px;height:4px;background:#1ab4f0;"></div>
<div class="t" style="top:1019.00px;font-size:12.60px;line-height:12.60px;color:#15244f;left:756px;letter-spacing:0.2px;">sv10-sjc <svg class="arr" width="16.5" height="8" viewBox="0 0 16.5 8"><path d="M2 4 H14.8 M5.4 0.6 L2 4 L5.4 7.4 M11.4 0.6 L14.8 4 L11.4 7.4" fill="none" stroke="#15244f" stroke-width="1.25" stroke-linecap="round" stroke-linejoin="round"/></svg> galactic-gcp</div>
<div class="t" style="top:1019.00px;font-size:12.60px;line-height:12.60px;color:#5e6a7e;right:495px;text-align:right;"><span class="ul">182 ms</span></div>
<div class="a" style="left:756px;top:1041px;width:196px;height:4px;background:#1ab4f0;"></div>
<div class="t" style="top:1050.00px;font-size:12.60px;line-height:12.60px;color:#15244f;left:756px;letter-spacing:0.2px;">pa4-par <svg class="arr" width="16.5" height="8" viewBox="0 0 16.5 8"><path d="M2 4 H14.8 M5.4 0.6 L2 4 L5.4 7.4 M11.4 0.6 L14.8 4 L11.4 7.4" fill="none" stroke="#15244f" stroke-width="1.25" stroke-linecap="round" stroke-linejoin="round"/></svg> wsronek-vmware-ce2-small</div>
<div class="t" style="top:1050.00px;font-size:12.60px;line-height:12.60px;color:#5e6a7e;right:495px;text-align:right;"><span class="ul">163 ms</span></div>
<div class="a" style="left:756px;top:1072px;width:193px;height:4px;background:#1ab4f0;"></div>
<div class="t" style="top:1081.00px;font-size:12.60px;line-height:12.60px;color:#15244f;left:756px;letter-spacing:0.2px;">pa4-par <svg class="arr" width="16.5" height="8" viewBox="0 0 16.5 8"><path d="M2 4 H14.8 M5.4 0.6 L2 4 L5.4 7.4 M11.4 0.6 L14.8 4 L11.4 7.4" fill="none" stroke="#15244f" stroke-width="1.25" stroke-linecap="round" stroke-linejoin="round"/></svg> wsronek-vmware-ce1-small</div>
<div class="t" style="top:1081.00px;font-size:12.60px;line-height:12.60px;color:#5e6a7e;right:495px;text-align:right;"><span class="ul">160 ms</span></div>
<div class="a" style="left:756px;top:1103px;width:173px;height:4px;background:#1ab4f0;"></div>
<div class="t" style="top:1112.00px;font-size:12.60px;line-height:12.60px;color:#15244f;left:756px;letter-spacing:0.2px;">ny8-nyc <svg class="arr" width="16.5" height="8" viewBox="0 0 16.5 8"><path d="M2 4 H14.8 M5.4 0.6 L2 4 L5.4 7.4 M11.4 0.6 L14.8 4 L11.4 7.4" fill="none" stroke="#15244f" stroke-width="1.25" stroke-linecap="round" stroke-linejoin="round"/></svg> ap-store-4</div>
<div class="t" style="top:1112.00px;font-size:12.60px;line-height:12.60px;color:#5e6a7e;right:495px;text-align:right;"><span class="ul">143 ms</span></div>
<div class="a" style="left:756px;top:1134px;width:156px;height:4px;background:#1ab4f0;"></div>
<div class="t" style="top:1143.00px;font-size:12.60px;line-height:12.60px;color:#15244f;left:756px;letter-spacing:0.2px;">pa4-par <svg class="arr" width="16.5" height="8" viewBox="0 0 16.5 8"><path d="M2 4 H14.8 M5.4 0.6 L2 4 L5.4 7.4 M11.4 0.6 L14.8 4 L11.4 7.4" fill="none" stroke="#15244f" stroke-width="1.25" stroke-linecap="round" stroke-linejoin="round"/></svg> galactic-azure-ce-smg</div>
<div class="t" style="top:1143.00px;font-size:12.60px;line-height:12.60px;color:#5e6a7e;right:495px;text-align:right;"><span class="ul">129 ms</span></div>
<div class="a" style="left:756px;top:1165px;width:122px;height:4px;background:#1ab4f0;"></div>
<div class="t" style="top:1174.00px;font-size:12.60px;line-height:12.60px;color:#15244f;left:756px;letter-spacing:0.2px;">sv10-sjc <svg class="arr" width="16.5" height="8" viewBox="0 0 16.5 8"><path d="M2 4 H14.8 M5.4 0.6 L2 4 L5.4 7.4 M11.4 0.6 L14.8 4 L11.4 7.4" fill="none" stroke="#15244f" stroke-width="1.25" stroke-linecap="round" stroke-linejoin="round"/></svg> ap-store-4</div>
<div class="t" style="top:1174.00px;font-size:12.60px;line-height:12.60px;color:#5e6a7e;right:495px;text-align:right;"><span class="ul">101 ms</span></div>
<div class="a" style="left:756px;top:1196px;width:102px;height:4px;background:#1ab4f0;"></div>
<div class="t" style="top:1205.00px;font-size:12.60px;line-height:12.60px;color:#15244f;left:756px;letter-spacing:0.2px;">ny8-nyc <svg class="arr" width="16.5" height="8" viewBox="0 0 16.5 8"><path d="M2 4 H14.8 M5.4 0.6 L2 4 L5.4 7.4 M11.4 0.6 L14.8 4 L11.4 7.4" fill="none" stroke="#15244f" stroke-width="1.25" stroke-linecap="round" stroke-linejoin="round"/></svg> usa-stores-1</div>
<div class="t" style="top:1205.00px;font-size:12.60px;line-height:12.60px;color:#5e6a7e;right:495px;text-align:right;"><span class="ul">84.9 ms</span></div>
<div class="a" style="left:756px;top:1227px;width:101px;height:4px;background:#1ab4f0;"></div>
<div class="t" style="top:1236.00px;font-size:12.60px;line-height:12.60px;color:#15244f;left:756px;letter-spacing:0.2px;">ny8-nyc <svg class="arr" width="16.5" height="8" viewBox="0 0 16.5 8"><path d="M2 4 H14.8 M5.4 0.6 L2 4 L5.4 7.4 M11.4 0.6 L14.8 4 L11.4 7.4" fill="none" stroke="#15244f" stroke-width="1.25" stroke-linecap="round" stroke-linejoin="round"/></svg> galactic-multi-inf-vm-sjc</div>
<div class="t" style="top:1236.00px;font-size:12.60px;line-height:12.60px;color:#5e6a7e;right:495px;text-align:right;"><span class="ul">84.1 ms</span></div>
<div class="a card" style="left:1169px;top:889px;width:417px;height:462px"></div>
<div class="t" style="top:910.00px;font-size:18.90px;line-height:18.90px;color:#15244f;left:1190.5px;letter-spacing:0px;"><span class="ul">Top 10 links (by Drop Rate)</span></div>
<div class="t" style="top:951.00px;font-size:12.00px;line-height:12.00px;color:#15244f;font-weight:700;left:1190.5px;">Name</div>
<div class="t" style="top:951.00px;font-size:12.00px;line-height:12.00px;color:#15244f;font-weight:700;right:60px;text-align:right;">In<span style='padding:0 1.5px'> | </span>Out</div>
<div class="a" style="left:1190px;top:973px;width:377px;height:4px;background:#ff66cc;"></div>
<div class="t" style="top:982.00px;font-size:12.60px;line-height:12.60px;color:#15244f;left:1190px;letter-spacing:0.2px;">ny8-nyc <svg class="arr" width="16.5" height="8" viewBox="0 0 16.5 8"><path d="M2 4 H14.8 M5.4 0.6 L2 4 L5.4 7.4 M11.4 0.6 L14.8 4 L11.4 7.4" fill="none" stroke="#15244f" stroke-width="1.25" stroke-linecap="round" stroke-linejoin="round"/></svg> galactic-kvm-pk8s</div>
<div class="t" style="top:982.00px;font-size:12.60px;line-height:12.60px;color:#5e6a7e;right:60px;text-align:right;"><span class="ul">0.15 pps</span><span class="sep"> | </span><span class="ul">0 pps</span></div>
<div class="a" style="left:1190px;top:1004px;width:376px;height:4px;background:#ff66cc;"></div>
<div class="t" style="top:1013.00px;font-size:12.60px;line-height:12.60px;color:#15244f;left:1190px;letter-spacing:0.2px;">ny8-nyc <svg class="arr" width="16.5" height="8" viewBox="0 0 16.5 8"><path d="M2 4 H14.8 M5.4 0.6 L2 4 L5.4 7.4 M11.4 0.6 L14.8 4 L11.4 7.4" fill="none" stroke="#15244f" stroke-width="1.25" stroke-linecap="round" stroke-linejoin="round"/></svg> eu-store-2</div>
<div class="t" style="top:1013.00px;font-size:12.60px;line-height:12.60px;color:#5e6a7e;right:60px;text-align:right;"><span class="ul">0.15 pps</span><span class="sep"> | </span><span class="ul">0 pps</span></div>
<div class="a" style="left:1190px;top:1035px;width:375px;height:4px;background:#ff66cc;"></div>
<div class="t" style="top:1044.00px;font-size:12.60px;line-height:12.60px;color:#15244f;left:1190px;letter-spacing:0.2px;">ny8-nyc <svg class="arr" width="16.5" height="8" viewBox="0 0 16.5 8"><path d="M2 4 H14.8 M5.4 0.6 L2 4 L5.4 7.4 M11.4 0.6 L14.8 4 L11.4 7.4" fill="none" stroke="#15244f" stroke-width="1.25" stroke-linecap="round" stroke-linejoin="round"/></svg> eu-store-0</div>
<div class="t" style="top:1044.00px;font-size:12.60px;line-height:12.60px;color:#5e6a7e;right:60px;text-align:right;"><span class="ul">0.15 pps</span><span class="sep"> | </span><span class="ul">0 pps</span></div>
<div class="a" style="left:1190px;top:1066px;width:374px;height:4px;background:#ff66cc;"></div>
<div class="t" style="top:1075.00px;font-size:12.60px;line-height:12.60px;color:#15244f;left:1190px;letter-spacing:0.2px;">ny8-nyc <svg class="arr" width="16.5" height="8" viewBox="0 0 16.5 8"><path d="M2 4 H14.8 M5.4 0.6 L2 4 L5.4 7.4 M11.4 0.6 L14.8 4 L11.4 7.4" fill="none" stroke="#15244f" stroke-width="1.25" stroke-linecap="round" stroke-linejoin="round"/></svg> eu-store-1</div>
<div class="t" style="top:1075.00px;font-size:12.60px;line-height:12.60px;color:#5e6a7e;right:60px;text-align:right;"><span class="ul">0.15 pps</span><span class="sep"> | </span><span class="ul">0 pps</span></div>
<div class="a" style="left:1190px;top:1097px;width:326px;height:4px;background:#ff66cc;"></div>
<div class="t" style="top:1106.00px;font-size:12.60px;line-height:12.60px;color:#15244f;left:1190px;letter-spacing:0.2px;">pa4-par <svg class="arr" width="16.5" height="8" viewBox="0 0 16.5 8"><path d="M2 4 H14.8 M5.4 0.6 L2 4 L5.4 7.4 M11.4 0.6 L14.8 4 L11.4 7.4" fill="none" stroke="#15244f" stroke-width="1.25" stroke-linecap="round" stroke-linejoin="round"/></svg> eu-store-0</div>
<div class="t" style="top:1106.00px;font-size:12.60px;line-height:12.60px;color:#5e6a7e;right:60px;text-align:right;"><span class="ul">0.13 pps</span><span class="sep"> | </span><span class="ul">0 pps</span></div>
<div class="a" style="left:1190px;top:1128px;width:321px;height:4px;background:#ff66cc;"></div>
<div class="t" style="top:1137.00px;font-size:12.60px;line-height:12.60px;color:#15244f;left:1190px;letter-spacing:0.2px;">pa4-par <svg class="arr" width="16.5" height="8" viewBox="0 0 16.5 8"><path d="M2 4 H14.8 M5.4 0.6 L2 4 L5.4 7.4 M11.4 0.6 L14.8 4 L11.4 7.4" fill="none" stroke="#15244f" stroke-width="1.25" stroke-linecap="round" stroke-linejoin="round"/></svg> eu-store-1</div>
<div class="t" style="top:1137.00px;font-size:12.60px;line-height:12.60px;color:#5e6a7e;right:60px;text-align:right;"><span class="ul">0.13 pps</span><span class="sep"> | </span><span class="ul">0 pps</span></div>
<div class="a" style="left:1190px;top:1159px;width:320px;height:4px;background:#ff66cc;"></div>
<div class="t" style="top:1168.00px;font-size:12.60px;line-height:12.60px;color:#15244f;left:1190px;letter-spacing:0.2px;">pa4-par <svg class="arr" width="16.5" height="8" viewBox="0 0 16.5 8"><path d="M2 4 H14.8 M5.4 0.6 L2 4 L5.4 7.4 M11.4 0.6 L14.8 4 L11.4 7.4" fill="none" stroke="#15244f" stroke-width="1.25" stroke-linecap="round" stroke-linejoin="round"/></svg> eu-store-2</div>
<div class="t" style="top:1168.00px;font-size:12.60px;line-height:12.60px;color:#5e6a7e;right:60px;text-align:right;"><span class="ul">0.13 pps</span><span class="sep"> | </span><span class="ul">0 pps</span></div>
<div class="a" style="left:1190px;top:1190px;width:314px;height:4px;background:#ff66cc;"></div>
<div class="t" style="top:1199.00px;font-size:12.60px;line-height:12.60px;color:#15244f;left:1190px;letter-spacing:0.2px;">pa4-par <svg class="arr" width="16.5" height="8" viewBox="0 0 16.5 8"><path d="M2 4 H14.8 M5.4 0.6 L2 4 L5.4 7.4 M11.4 0.6 L14.8 4 L11.4 7.4" fill="none" stroke="#15244f" stroke-width="1.25" stroke-linecap="round" stroke-linejoin="round"/></svg> galactic-kvm-pk8s</div>
<div class="t" style="top:1199.00px;font-size:12.60px;line-height:12.60px;color:#5e6a7e;right:60px;text-align:right;"><span class="ul">0.13 pps</span><span class="sep"> | </span><span class="ul">0 pps</span></div>
<div class="a" style="left:1190px;top:1221px;width:103px;height:4px;background:#ff66cc;"></div>
<div class="t" style="top:1230.00px;font-size:12.60px;line-height:12.60px;color:#15244f;left:1190px;letter-spacing:0.2px;">sv10-sjc <svg class="arr" width="16.5" height="8" viewBox="0 0 16.5 8"><path d="M2 4 H14.8 M5.4 0.6 L2 4 L5.4 7.4 M11.4 0.6 L14.8 4 L11.4 7.4" fill="none" stroke="#15244f" stroke-width="1.25" stroke-linecap="round" stroke-linejoin="round"/></svg> cloudlink-poc-aws</div>
<div class="t" style="top:1230.00px;font-size:12.60px;line-height:12.60px;color:#5e6a7e;right:60px;text-align:right;"><span class="ul">0.04 pps</span><span class="sep"> | </span><span class="ul">0 pps</span></div>
<div class="a" style="left:1190px;top:1252px;width:102px;height:4px;background:#ff66cc;"></div>
<div class="t" style="top:1261.00px;font-size:12.60px;line-height:12.60px;color:#15244f;left:1190px;letter-spacing:0.2px;">sv10-sjc <svg class="arr" width="16.5" height="8" viewBox="0 0 16.5 8"><path d="M2 4 H14.8 M5.4 0.6 L2 4 L5.4 7.4 M11.4 0.6 L14.8 4 L11.4 7.4" fill="none" stroke="#15244f" stroke-width="1.25" stroke-linecap="round" stroke-linejoin="round"/></svg> galactic-aws-100-smgs-23</div>
<div class="t" style="top:1261.00px;font-size:12.60px;line-height:12.60px;color:#5e6a7e;right:60px;text-align:right;"><span class="ul">0.04 pps</span><span class="sep"> | </span><span class="ul">0 pps</span></div>
<div class="a" style="left:1586px;top:1204px;width:50px;height:46px;background:#fff;border:1px solid #e3e7ef;border-radius:6px;box-shadow:0 2px 10px rgba(30,40,70,0.10)"></div>
<svg class="a" style="left:1596px;top:1217px" width="20" height="20" viewBox="0 0 20 20"><circle cx="10" cy="10" r="7.3" fill="none" stroke="#2f62f0" stroke-width="1.5"/><path d="M7.6 8 C7.6 6.4 8.7 5.6 10 5.6 C11.4 5.6 12.4 6.5 12.4 7.7 C12.4 9.2 10.4 9.4 10.1 11 V11.6" fill="none" stroke="#2f62f0" stroke-width="1.5"/><circle cx="10.1" cy="13.9" r="0.95" fill="#2f62f0"/></svg>
<div class="a" style="left:0px;top:0px;width:1627px;height:1px;background:#b9bcc2;"></div>
</body></html>
